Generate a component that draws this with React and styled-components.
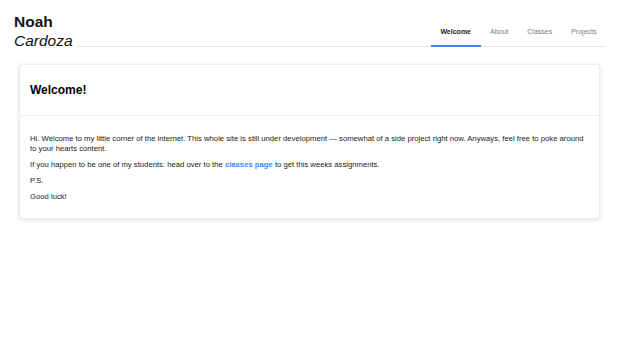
import React from "react";
import styled, { createGlobalStyle } from "styled-components";

const Global = createGlobalStyle`
  html, body { margin: 0; padding: 0; background: #fff; }
  body { font-family: "Liberation Sans", Arial, sans-serif; color: #1a1a1a; }
  * { box-sizing: border-box; }
`;

const Page = styled.div`
  width: 620px;
  min-height: 343px;
  background: #fff;
`;

const Header = styled.header`
  display: flex;
  align-items: flex-start;
  padding: 12px 14px 0;
`;

const Name = styled.div`
  display: flex;
  flex-direction: column;
  font-size: 15.5px;
  line-height: 19px;
  color: #111;
`;

const First = styled.span`
  font-weight: 700;
`;

const Last = styled.span`
  font-style: italic;
`;

const NavArea = styled.nav`
  flex: 1;
  height: 35px;
  margin-left: 4px;
  border-bottom: 1px solid #e6e6e6;
  display: flex;
  justify-content: flex-end;
  align-items: flex-end;
`;

const Tab = styled.a`
  display: block;
  padding: 0 9.5px 9.5px;
  margin-bottom: -1px;
  font-size: 7px;
  line-height: 9px;
  color: ${(p) => (p.$active ? "#1a1a1a" : "#7a7a7a")};
  font-weight: ${(p) => (p.$active ? 700 : 400)};
  border-bottom: 2px solid ${(p) => (p.$active ? "#3b82f6" : "transparent")};
  text-decoration: none;
  cursor: pointer;
`;

const Card = styled.section`
  margin: 14px 20px 0 19px;
  background: #fff;
  border: 1px solid #ececec;
  border-radius: 3px;
  box-shadow: 0 1px 4px rgba(0, 0, 0, 0.13);
`;

const CardHeader = styled.div`
  padding: 18px 10px 18px;
  border-bottom: 1px solid #eef0f3;
`;

const Title = styled.h1`
  margin: 0;
  font-size: 12px;
  line-height: 14px;
  font-weight: 700;
  color: #000;
`;

const CardBody = styled.div`
  padding: 18px 10px 17px;
`;

const Para = styled.p`
  margin: 0 0 6.5px;
  font-size: 7.7px;
  line-height: 9.5px;
  color: #1a1a1a;
  &:last-child { margin-bottom: 0; }
`;

const Link = styled.a`
  color: #2d8cff;
  font-weight: 700;
  text-decoration: none;
`;

export default function App() {
  return (
    <Page>
      <Global />
      <Header>
        <Name>
          <First>Noah</First>
          <Last>Cardoza</Last>
        </Name>
        <NavArea>
          <Tab $active>Welcome</Tab>
          <Tab>About</Tab>
          <Tab>Classes</Tab>
          <Tab>Projects</Tab>
        </NavArea>
      </Header>
      <Card>
        <CardHeader>
          <Title>Welcome!</Title>
        </CardHeader>
        <CardBody>
          <Para>
            Hi. Welcome to my little corner of the internet. This whole site is still under development — somewhat of a side project right now. Anyways, feel free to poke around to your hearts content.
          </Para>
          <Para>
            If you happen to be one of my students: head over to the <Link>classes page</Link> to get this weeks assignments.
          </Para>
          <Para>P.S.</Para>
          <Para>Good luck!</Para>
        </CardBody>
      </Card>
    </Page>
  );
}
